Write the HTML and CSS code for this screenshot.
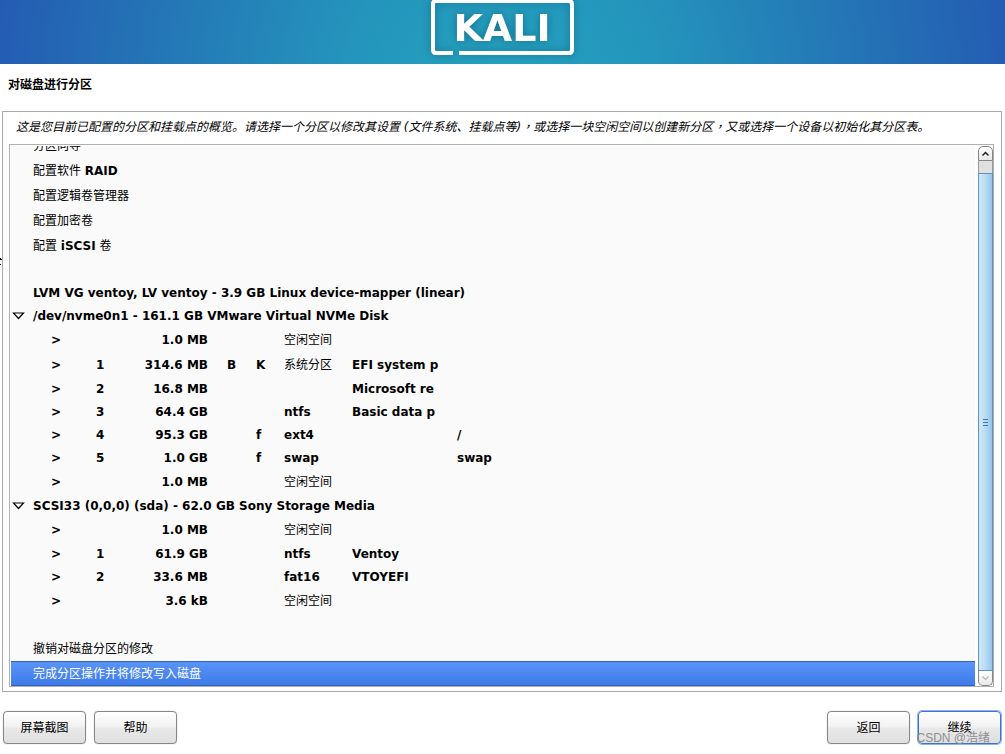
FILE: index.html
```html
<!DOCTYPE html>
<html lang="zh-CN">
<head>
<meta charset="utf-8">
<title>对磁盘进行分区</title>
<link rel="stylesheet" href="styles.css">
</head>
<body>
<header class="banner">
  <svg class="logo" width="158" height="64" viewBox="0 0 158 64" role="img" aria-label="KALI">
    <path d="M29 53H12Q9 53 9 50V4Q9 1 12 1H144Q148 1 148 4V50Q148 53 145 53H35" fill="none" stroke="#fff" stroke-width="4"/>
    <text class="logo-text" x="78" y="41" text-anchor="middle">KALI</text>
  </svg>
</header>
<h1 class="title">对磁盘进行分区</h1>
<main class="frame">
  <p class="intro">这是您目前已配置的分区和挂载点的概览。请选择一个分区以修改其设置 (文件系统、挂载点等)<span class="comma" lang="zh-TW">，</span>或选择一块空闲空间以创建新分区<span class="comma" lang="zh-TW">，</span>又或选择一个设备以初始化其分区表。</p>
  <div class="list">
    <div class="view">
      <table class="tree">
        <colgroup><col class="c-toggle"><col class="c-mark"><col class="c-num"><col class="c-size"><col class="c-flag"><col class="c-use"><col class="c-fs"><col class="c-name"><col></colgroup>
        <tbody>
        <tr class="tall"><td></td><td colspan="8">分区向导</td></tr>
        <tr class="tall"><td></td><td colspan="8">配置软件 <b>RAID</b></td></tr>
        <tr class="tall"><td></td><td colspan="8">配置逻辑卷管理器</td></tr>
        <tr class="tall"><td></td><td colspan="8">配置加密卷</td></tr>
        <tr class="tall"><td></td><td colspan="8">配置 <b>iSCSI</b> 卷</td></tr>
        <tr><td colspan="9"></td></tr>
        <tr><td></td><td colspan="8"><b>LVM VG ventoy, LV ventoy - 3.9 GB Linux device-mapper (linear)</b></td></tr>
        <tr><td><button class="toggle" aria-label="nvme0n1"><svg width="13" height="8" viewBox="0 0 13 8"><path d="M1.500 1H11.500L6.500 6.500Z" fill="#fff" stroke="#000" stroke-width="1.200"/></svg></button></td><td colspan="8"><b>/dev/nvme0n1 - 161.1 GB VMware Virtual NVMe Disk</b></td></tr>
        <tr class="tall"><td></td><td class="mark">&gt;</td><td></td><td class="size">1.0 MB</td><td></td><td></td><td>空闲空间</td><td></td><td></td></tr>
        <tr class="tall"><td></td><td class="mark">&gt;</td><td><b>1</b></td><td class="size">314.6 MB</td><td><b>B</b></td><td><b>K</b></td><td>系统分区</td><td><b>EFI system p</b></td><td></td></tr>
        <tr><td></td><td class="mark">&gt;</td><td><b>2</b></td><td class="size">16.8 MB</td><td></td><td></td><td></td><td><b>Microsoft re</b></td><td></td></tr>
        <tr><td></td><td class="mark">&gt;</td><td><b>3</b></td><td class="size">64.4 GB</td><td></td><td></td><td><b>ntfs</b></td><td><b>Basic data p</b></td><td></td></tr>
        <tr><td></td><td class="mark">&gt;</td><td><b>4</b></td><td class="size">95.3 GB</td><td></td><td><b>f</b></td><td><b>ext4</b></td><td></td><td><b>/</b></td></tr>
        <tr><td></td><td class="mark">&gt;</td><td><b>5</b></td><td class="size">1.0 GB</td><td></td><td><b>f</b></td><td><b>swap</b></td><td></td><td><b>swap</b></td></tr>
        <tr class="tall"><td></td><td class="mark">&gt;</td><td></td><td class="size">1.0 MB</td><td></td><td></td><td>空闲空间</td><td></td><td></td></tr>
        <tr><td><button class="toggle" aria-label="sda"><svg width="13" height="8" viewBox="0 0 13 8"><path d="M1.500 1H11.500L6.500 6.500Z" fill="#fff" stroke="#000" stroke-width="1.200"/></svg></button></td><td colspan="8"><b>SCSI33 (0,0,0) (sda) - 62.0 GB Sony Storage Media</b></td></tr>
        <tr class="tall"><td></td><td class="mark">&gt;</td><td></td><td class="size">1.0 MB</td><td></td><td></td><td>空闲空间</td><td></td><td></td></tr>
        <tr><td></td><td class="mark">&gt;</td><td><b>1</b></td><td class="size">61.9 GB</td><td></td><td></td><td><b>ntfs</b></td><td><b>Ventoy</b></td><td></td></tr>
        <tr><td></td><td class="mark">&gt;</td><td><b>2</b></td><td class="size">33.6 MB</td><td></td><td></td><td><b>fat16</b></td><td><b>VTOYEFI</b></td><td></td></tr>
        <tr class="tall"><td></td><td class="mark">&gt;</td><td></td><td class="size">3.6 kB</td><td></td><td></td><td>空闲空间</td><td></td><td></td></tr>
        <tr><td colspan="9"></td></tr>
        <tr class="tall"><td></td><td colspan="8">撤销对磁盘分区的修改</td></tr>
        <tr class="tall selected"><td></td><td colspan="8">完成分区操作并将修改写入磁盘</td></tr>
        </tbody>
      </table>
    </div>
    <div class="scrollbar">
      <button class="step up" aria-label="向上滚动"><svg width="9" height="6" viewBox="0 0 9 6"><path d="M1.500 4.500L4.500 1.500L7.500 4.500" fill="none" stroke="#222" stroke-width="1.500"/></svg></button>
      <div class="trough"></div>
      <div class="thumb"><i></i><i></i><i></i></div>
      <button class="step down" aria-label="向下滚动"><svg width="9" height="6" viewBox="0 0 9 6"><path d="M1.500 1.500L4.500 4.500L7.500 1.500" fill="none" stroke="#b5b5b5" stroke-width="1.200"/></svg></button>
    </div>
  </div>
</main>
<footer class="actions">
  <button class="btn">屏幕截图</button>
  <button class="btn">帮助</button>
  <span class="spacer"></span>
  <button class="btn">返回</button>
  <button class="btn primary">继续</button>
</footer>
<div class="watermark">CSDN @浩绪</div>
<svg class="pointer" width="3" height="10" viewBox="0 0 3 10" aria-hidden="true"><path d="M0 1H1V2H2V3H0ZM0 7H1V8H0Z" fill="#000"/></svg>
</body>
</html>
```
FILE: styles.css
```css
* { box-sizing: border-box; }
body {
  margin: 0;
  height: 100vh;
  display: flex;
  flex-direction: column;
  position: relative;
  overflow: hidden;
  background: #fff;
  color: #000;
  font: 12px/18px "DejaVu Sans", "Noto Sans CJK SC", sans-serif;
}
button { font: inherit; color: inherit; margin: 0; padding: 0; }
.banner {
  flex: none;
  height: 64px;
  display: flex;
  justify-content: center;
  background: radial-gradient(circle 540px at 50% 90px, #24a4bf 0, #2494bc 30%, #2478b6 62%, #2457b2 100%);
}
.logo { display: block; filter: drop-shadow(0 0 4px #0a4c6a99); }
.logo-text { font: bold 38px "DejaVu Sans", sans-serif; fill: #fff; }
.title { margin: 12px 8px 17px; font-size: 12px; line-height: 18px; font-weight: bold; }
.frame {
  flex: 1;
  min-height: 0;
  margin: 0 3px 0 2px;
  border: 1px solid #a9a9a9;
  padding: 6px 7px 4px 6px;
  display: flex;
  flex-direction: column;
}
.intro { height: 18px; margin: 0 0 8px 7px; font-style: italic; }
.comma { font-family: "Noto Sans CJK TC", sans-serif; line-height: 1; }
.list {
  flex: 1;
  min-height: 0;
  display: flex;
  border: 1px solid #b0b0b0;
  padding: 1px 0 0 1px;
}
.view {
  flex: 1;
  min-width: 0;
  display: flex;
  flex-direction: column;
  justify-content: flex-end;
  overflow: hidden;
  background: #fafafa;
}
.tree { width: 100%; table-layout: fixed; border-collapse: collapse; flex: none; }
.c-toggle { width: 22px; }
.c-mark { width: 63px; }
.c-num { width: 30px; }
.c-size { width: 101px; }
.c-flag { width: 29px; }
.c-use { width: 28px; }
.c-fs { width: 68px; }
.c-name { width: 105px; }
.tree td { height: 23px; padding: 0; line-height: 18px; white-space: nowrap; vertical-align: middle; }
.tree .tall td { height: 25px; }
.tree .mark { padding-left: 18px; font-weight: bold; }
.tree .size { padding-right: 19px; text-align: right; font-weight: bold; }
.toggle { display: block; margin-left: 1px; border: 0; background: none; }
.toggle svg { display: block; }
.selected { color: #fff; background: linear-gradient(#5b95f8, #3d7ae8); box-shadow: inset 0 1px #2f62bd, inset 0 -1px #2f62bd; }
.scrollbar { flex: none; width: 15px; margin-left: 3px; display: flex; flex-direction: column; }
.step {
  height: 15px;
  border: 1px solid #858585;
  background: linear-gradient(#fff, #e8e8e8);
  display: flex;
  align-items: center;
  justify-content: center;
}
.up { border-radius: 5px 5px 0 0; }
.down { border-radius: 0 0 5px 5px; border-top: 0; }
.trough { height: 12px; background: #e0e0e0; border: solid #999; border-width: 0 1px; }
.thumb {
  flex: 1;
  border: 1px solid #5b93c2;
  background: linear-gradient(90deg, #d3e8f9, #b9dbf4 50%, #94c5ea);
  display: flex;
  flex-direction: column;
  align-items: center;
  justify-content: center;
  gap: 2px;
}
.thumb i { width: 5px; height: 1px; background: #3c78aa; }
.actions { flex: none; display: flex; gap: 8px; padding: 19px 4px 10px 3px; }
.spacer { flex: 1; }
.btn {
  width: 83px;
  height: 33px;
  border: 1px solid #868686;
  border-radius: 4px;
  background: linear-gradient(#fff, #f2f2f2 48%, #e9e9e9 52%, #dfdfdf);
  box-shadow: 0 0 1px #999;
}
.primary { border-color: #4272c4; box-shadow: 0 0 0 1px #8ab4f4; }
.watermark {
  position: absolute;
  right: 15px;
  bottom: 7px;
  color: #8f8f8f;
  font: 12px/18px "Liberation Sans", "Noto Sans CJK SC", sans-serif;
}
.pointer { position: absolute; left: 0; top: 257px; }
```
